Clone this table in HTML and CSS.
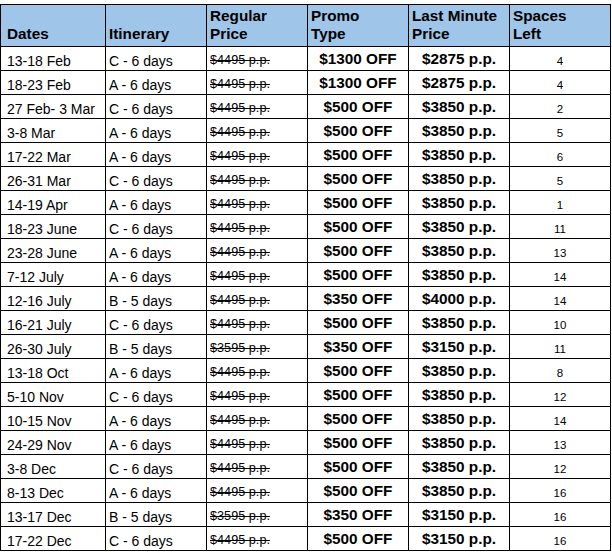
FILE: index.html
```html
<!DOCTYPE html>
<html>
<head>
<meta charset="utf-8">
<link rel="stylesheet" href="styles.css">
</head>
<body>
<div class="sheet">
<table class="dates">
<colgroup>
<col class="c1"><col class="c2"><col class="c3"><col class="c4"><col class="c5"><col class="c6">
</colgroup>
<thead>
<tr class="head">
<th class="first">Dates</th>
<th>Itinerary</th>
<th>Regular<br>Price</th>
<th>Promo<br>Type</th>
<th>Last Minute<br>Price</th>
<th>Spaces<br>Left</th>
</tr>
</thead>
<tbody>
<tr><td class="first">13-18 Feb</td><td>C - 6 days</td><td class="reg"><s>$4495 p.p.</s></td><td class="bold">$1300 OFF</td><td class="bold">$2875 p.p.</td><td class="num">4</td></tr>
<tr><td class="first">18-23 Feb</td><td>A - 6 days</td><td class="reg"><s>$4495 p.p.</s></td><td class="bold">$1300 OFF</td><td class="bold">$2875 p.p.</td><td class="num">4</td></tr>
<tr><td class="first">27 Feb- 3 Mar</td><td>C - 6 days</td><td class="reg"><s>$4495 p.p.</s></td><td class="bold">$500 OFF</td><td class="bold">$3850 p.p.</td><td class="num">2</td></tr>
<tr><td class="first">3-8 Mar</td><td>A - 6 days</td><td class="reg"><s>$4495 p.p.</s></td><td class="bold">$500 OFF</td><td class="bold">$3850 p.p.</td><td class="num">5</td></tr>
<tr><td class="first">17-22 Mar</td><td>A - 6 days</td><td class="reg"><s>$4495 p.p.</s></td><td class="bold">$500 OFF</td><td class="bold">$3850 p.p.</td><td class="num">6</td></tr>
<tr><td class="first">26-31 Mar</td><td>C - 6 days</td><td class="reg"><s>$4495 p.p.</s></td><td class="bold">$500 OFF</td><td class="bold">$3850 p.p.</td><td class="num">5</td></tr>
<tr><td class="first">14-19 Apr</td><td>A - 6 days</td><td class="reg"><s>$4495 p.p.</s></td><td class="bold">$500 OFF</td><td class="bold">$3850 p.p.</td><td class="num">1</td></tr>
<tr><td class="first">18-23 June</td><td>C - 6 days</td><td class="reg"><s>$4495 p.p.</s></td><td class="bold">$500 OFF</td><td class="bold">$3850 p.p.</td><td class="num">11</td></tr>
<tr><td class="first">23-28 June</td><td>A - 6 days</td><td class="reg"><s>$4495 p.p.</s></td><td class="bold">$500 OFF</td><td class="bold">$3850 p.p.</td><td class="num">13</td></tr>
<tr><td class="first">7-12 July</td><td>A - 6 days</td><td class="reg"><s>$4495 p.p.</s></td><td class="bold">$500 OFF</td><td class="bold">$3850 p.p.</td><td class="num">14</td></tr>
<tr><td class="first">12-16 July</td><td>B - 5 days</td><td class="reg"><s>$4495 p.p.</s></td><td class="bold">$350 OFF</td><td class="bold">$4000 p.p.</td><td class="num">14</td></tr>
<tr><td class="first">16-21 July</td><td>C - 6 days</td><td class="reg"><s>$4495 p.p.</s></td><td class="bold">$500 OFF</td><td class="bold">$3850 p.p.</td><td class="num">10</td></tr>
<tr><td class="first">26-30 July</td><td>B - 5 days</td><td class="reg"><s>$3595 p.p.</s></td><td class="bold">$350 OFF</td><td class="bold">$3150 p.p.</td><td class="num">11</td></tr>
<tr><td class="first">13-18 Oct</td><td>A - 6 days</td><td class="reg"><s>$4495 p.p.</s></td><td class="bold">$500 OFF</td><td class="bold">$3850 p.p.</td><td class="num">8</td></tr>
<tr><td class="first">5-10 Nov</td><td>C - 6 days</td><td class="reg"><s>$4495 p.p.</s></td><td class="bold">$500 OFF</td><td class="bold">$3850 p.p.</td><td class="num">12</td></tr>
<tr><td class="first">10-15 Nov</td><td>A - 6 days</td><td class="reg"><s>$4495 p.p.</s></td><td class="bold">$500 OFF</td><td class="bold">$3850 p.p.</td><td class="num">14</td></tr>
<tr><td class="first">24-29 Nov</td><td>A - 6 days</td><td class="reg"><s>$4495 p.p.</s></td><td class="bold">$500 OFF</td><td class="bold">$3850 p.p.</td><td class="num">13</td></tr>
<tr><td class="first">3-8 Dec</td><td>C - 6 days</td><td class="reg"><s>$4495 p.p.</s></td><td class="bold">$500 OFF</td><td class="bold">$3850 p.p.</td><td class="num">12</td></tr>
<tr><td class="first">8-13 Dec</td><td>A - 6 days</td><td class="reg"><s>$4495 p.p.</s></td><td class="bold">$500 OFF</td><td class="bold">$3850 p.p.</td><td class="num">16</td></tr>
<tr><td class="first">13-17 Dec</td><td>B - 5 days</td><td class="reg"><s>$3595 p.p.</s></td><td class="bold">$350 OFF</td><td class="bold">$3150 p.p.</td><td class="num">16</td></tr>
<tr><td class="first">17-22 Dec</td><td>C - 6 days</td><td class="reg"><s>$4495 p.p.</s></td><td class="bold">$500 OFF</td><td class="bold">$3150 p.p.</td><td class="num">16</td></tr>
</tbody>
</table>
</div>
</body>
</html>
```
FILE: styles.css
```css
html, body {
  margin: 0;
  padding: 0;
  background: #ffffff;
}
body {
  font-family: "Liberation Sans", Arial, sans-serif;
  color: #000000;
}
.sheet {
  padding-top: 4px;
}
.dates {
  border-collapse: collapse;
  table-layout: fixed;
  width: 610px;
}
.c1 { width: 105px; }
.c2, .c3, .c4, .c5, .c6 { width: 101px; }
.dates th,
.dates td {
  border: 1px solid #000000;
  padding: 0 0 1px 3px;
  vertical-align: bottom;
  text-align: left;
  white-space: nowrap;
  overflow: hidden;
}
.head {
  height: 42px;
}
.dates th {
  background: #9fc5e8;
  font-size: 15.3px;
  font-weight: bold;
  line-height: 18px;
  padding-bottom: 3px;
}
.dates tbody tr {
  height: 24px;
}
.dates td {
  font-size: 14px;
  line-height: 16px;
}
.dates .first {
  padding-left: 6px;
}
.dates td.reg {
  font-size: 12.7px;
  padding-bottom: 2px;
}
.dates td.bold {
  font-size: 15.3px;
  font-weight: bold;
  text-align: center;
  padding-left: 0;
  padding-bottom: 3px;
}
.dates td.num {
  font-size: 11.5px;
  text-align: center;
  padding-left: 0;
  padding-bottom: 1px;
}
```
